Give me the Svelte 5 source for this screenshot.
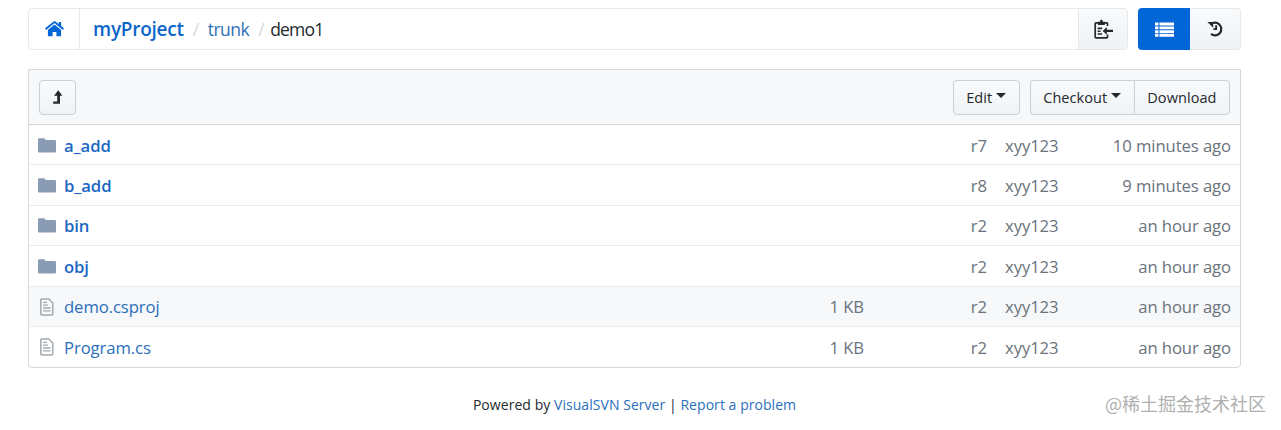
<script>
  const folders = [
    { name: 'a_add', rev: 'r7', age: '10 minutes ago' },
    { name: 'b_add', rev: 'r8', age: '9 minutes ago' },
    { name: 'bin', rev: 'r2', age: 'an hour ago' },
    { name: 'obj', rev: 'r2', age: 'an hour ago' }
  ];
  const files = [
    { name: 'demo.csproj', size: '1 KB', rev: 'r2', age: 'an hour ago', alt: true },
    { name: 'Program.cs', size: '1 KB', rev: 'r2', age: 'an hour ago', alt: false }
  ];
</script>

<div class="page">
  <div class="top">
    <div class="crumbs">
      <a class="home" href="#home" aria-label="Home">
        <svg width="19" height="16" viewBox="0 0 19 16"><path fill="#0366d6" d="M9.500 3.400 2.900 8.900V14.600c0 .4.300.7.700.7h4V11h3.800v4.300h4c.4 0 .7-.3.700-.7V8.900L9.500 3.400ZM18.800 7.200 16.200 5V1.200c0-.2-.1-.3-.3-.3h-1.800c-.2 0-.3.100-.3.300v1.900L10.400.5C9.900.1 9.100.1 8.600.5L.2 7.200c-.1.100-.2.300 0 .5l.8 1c.1.100.3.200.5 0l8-6.600 8 6.600c.1.100.3.100.5 0l.8-1c.1-.2.1-.4 0-.5Z"/></svg>
      </a>
      <div class="path">
        <a class="proj" href="#p">myProject</a>
        <span class="sep">/</span>
        <a href="#t">trunk</a>
        <span class="sep">/</span>
        <span class="cur">demo1</span>
      </div>
      <button class="clip" aria-label="Copy path">
        <svg width="19" height="20" viewBox="0 0 19 20"><path fill="none" stroke="#24292e" stroke-width="1.700" d="M13.500 7V4.600c0-.5-.3-.8-.8-.8H2c-.5 0-.8.300-.8.800V18c0 .5.300.8.800.8h10.700c.5 0 .8-.3.800-.8V15.500"/><path fill="#24292e" d="M4 2.800h2C6.200 1.200 6.700.4 7.400.4s1.200.8 1.400 2.400h2V6H4V2.800ZM3.600 8.600h4.500v1.600H3.600ZM3.600 11.400h3v1.600h-3ZM3.600 14.200h4.500v1.600H3.600Z"/><path fill="#24292e" d="M12.800 8v2.700H19v2.400h-6.200v2.700L8.700 11.900Z"/></svg>
      </button>
    </div>
    <div class="views">
      <button class="on" aria-label="List">
        <svg width="19" height="15" viewBox="0 0 19 15"><path fill="#fff" d="M0 .5h3.500v3H0ZM4.500.5H19v3H4.500ZM0 4.500h3.500v2.700H0ZM4.500 4.500H19v2.700H4.500ZM0 8.200h3.500v2.700H0ZM4.500 8.200H19v2.700H4.500ZM0 11.800h3.500v3H0ZM4.500 11.800H19v3H4.500Z"/></svg>
      </button>
      <button class="off" aria-label="History">
        <svg width="17" height="16" viewBox="0 0 17 16"><path fill="none" stroke="#24292e" stroke-width="2.200" d="M3.600 3.500A6.300 6.300 0 1 1 4 12.900"/><path fill="#24292e" d="M.4 1h5.800v5.800ZM8.200 4.200h1.900v4.900H6.400V7.300h1.800Z"/></svg>
      </button>
    </div>
  </div>

  <div class="panel">
    <div class="bar">
      <button class="btn up" aria-label="Up">
        <svg width="11" height="14" viewBox="0 0 11 14"><path fill="#24292e" d="M6.200.3 10.400 5.800H8v7.900H1.200v-2.200h4V5.800H2Z"/></svg>
      </button>
      <div class="tools">
        <button class="btn">Edit<i class="caret"></i></button>
        <div class="group">
          <button class="btn">Checkout<i class="caret"></i></button>
          <button class="btn">Download</button>
        </div>
      </div>
    </div>
    {#each folders as f}
      <div class="row">
        <svg class="ic" width="18" height="15" viewBox="0 0 18 15"><path fill="#8a9bb4" d="M0 1.500C0 .7.600.2 1.300.2h4.400c.6 0 1 .2 1.300.7l.6 1.100h9c.8 0 1.400.6 1.400 1.300v9.900c0 .8-.6 1.300-1.400 1.300H1.300C.6 14.500 0 14 0 13.200Z"/></svg>
        <a class="name dir" href="#f">{f.name}</a>
        <span class="rev">{f.rev}</span>
        <span class="user">xyy123</span>
        <span class="age">{f.age}</span>
      </div>
    {/each}
    {#each files as f}
      <div class="row" class:alt={f.alt}>
        <svg class="ic" width="18" height="18" viewBox="0 0 18 18"><path fill="none" stroke="#a3a9af" stroke-width="1.500" d="M3.800 1h7l4 4v11c0 .6-.4 1-1 1h-10c-.6 0-1-.4-1-1V2c0-.6.4-1 1-1Z"/><path fill="none" stroke="#a3a9af" stroke-width="1.300" d="M5 7.200h5M5 10h7.500M5 12.800h7.500M5 4.400h4"/></svg>
        <a class="name" href="#f">{f.name}</a>
        <span class="size">{f.size}</span>
        <span class="rev">{f.rev}</span>
        <span class="user">xyy123</span>
        <span class="age">{f.age}</span>
      </div>
    {/each}
  </div>

  <div class="foot">
    Powered by <a href="#v">VisualSVN Server</a> | <a href="#r">Report a problem</a>
  </div>
  <div class="mark">@稀土掘金技术社区</div>
</div>

<style>
  :global(body) {
    margin: 0;
    background: #fff;
  }
  .page {
    position: relative;
    box-sizing: border-box;
    width: 1281px;
    height: 430px;
    padding: 8px 40px 0 28px;
    font-family: "Open Sans", "Noto Sans", sans-serif;
    font-size: 16px;
    color: #24292e;
    overflow: hidden;
  }
  a {
    color: #0366d6;
    text-decoration: none;
  }
  button {
    font: inherit;
    color: inherit;
    padding: 0;
    cursor: pointer;
  }
  .top {
    display: flex;
    gap: 10px;
    height: 42px;
  }
  .crumbs {
    flex: 1;
    display: flex;
    align-items: stretch;
    border: 1px solid #e6e8ea;
    border-radius: 4px;
    box-sizing: border-box;
    overflow: hidden;
  }
  .home {
    width: 51px;
    display: flex;
    align-items: center;
    justify-content: center;
    border-right: 1px solid #e6e8ea;
    box-sizing: border-box;
  }
  .path {
    flex: 1;
    display: flex;
    align-items: center;
    gap: 9px;
    padding-left: 13px;
    font-size: 17.500px;
    letter-spacing: -0.5px;
  }
  .path a { color: #2f6fb5; }
  .path .proj {
    font-size: 19px;
    font-weight: 600;
    color: #0b66c9;
    letter-spacing: -0.25px;
  }
  .sep { color: #d4d8dc; }
  .cur {
    color: #24292e;
    margin-left: -3px;
    letter-spacing: -0.8px;
  }
  .clip {
    width: 49px;
    border: 0;
    border-left: 1px solid #e6e8ea;
    background: linear-gradient(#f9fafb, #f0f2f4);
    display: flex;
    align-items: center;
    justify-content: center;
  }
  .views {
    width: 103px;
    display: flex;
  }
  .views button {
    display: flex;
    align-items: center;
    justify-content: center;
    box-sizing: border-box;
    height: 42px;
  }
  .on {
    width: 52px;
    border: 0;
    background: #0366d6;
    border-radius: 4px 0 0 4px;
  }
  .off {
    width: 51px;
    border: 1px solid #e6e8ea;
    border-left: 0;
    border-radius: 0 4px 4px 0;
    background: linear-gradient(#f9fafb, #f0f2f4);
  }
  .panel {
    margin-top: 19px;
    border: 1px solid #d5d8db;
    border-radius: 0 0 4px 4px;
  }
  .bar {
    height: 55px;
    box-sizing: border-box;
    background: #f6f8fa;
    border-bottom: 1px solid #d5d8db;
    display: flex;
    align-items: center;
    justify-content: space-between;
    padding: 0 10px;
  }
  .btn {
    height: 35px;
    box-sizing: border-box;
    border: 1px solid #ccd0d4;
    border-radius: 4px;
    background: linear-gradient(#f9fafb, #f0f2f4);
    font-size: 14.500px;
    letter-spacing: 0.07px;
    padding: 0 12.500px;
    display: inline-flex;
    align-items: center;
  }
  .up {
    width: 37px;
    padding: 0;
    justify-content: center;
  }
  .tools {
    display: flex;
    gap: 10px;
  }
  .group {
    display: flex;
  }
  .group .btn:first-child {
    border-radius: 4px 0 0 4px;
    border-right: 0;
  }
  .group .btn:last-child {
    border-radius: 0 4px 4px 0;
  }
  .caret {
    display: inline-block;
    margin-left: 4px;
    margin-top: -3px;
    border-top: 5px solid #24292e;
    border-left: 5px solid transparent;
    border-right: 5px solid transparent;
  }
  .row {
    height: 40.400px;
    box-sizing: border-box;
    display: flex;
    align-items: center;
    padding: 1px 9px 0;
    border-bottom: 1px solid #e9ebed;
    font-size: 16.700px;
    letter-spacing: -0.1px;
    color: #6a737d;
  }
  .row:last-of-type { border-bottom: 0; padding-top: 0; }
  .alt { background: #f6f8fa; }
  .ic {
    flex: none;
    margin-right: 8px;
  }
  .name {
    flex: 1;
    color: #2a6fbb;
  }
  .dir {
    font-weight: 600;
    color: #1a67c4;
  }
  .size {
    width: 60px;
    text-align: right;
    margin-right: 93px;
  }
  .rev {
    width: 30px;
    text-align: right;
  }
  .user {
    width: 76px;
    margin-left: 18px;
  }
  .age {
    width: 144px;
    text-align: right;
    margin-left: 6px;
  }
  .foot {
    margin-top: 27px;
    margin-left: 169px;
    text-align: center;
    width: 875px;
    font-size: 14px;
    letter-spacing: 0.05px;
    line-height: 20px;
  }
  .foot a { color: #2a6fbb; }
  .mark {
    position: absolute;
    right: 15px;
    top: 392px;
    font-size: 18px;
    font-family: "Noto Sans CJK SC", sans-serif;
    color: #b0b0b0;
    line-height: 22px;
  }
</style>
